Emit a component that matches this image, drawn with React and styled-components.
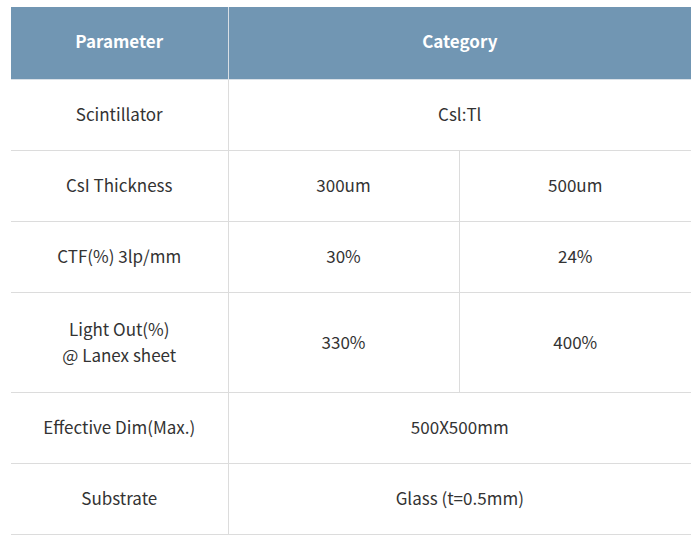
import styled, { createGlobalStyle } from "styled-components";

const GlobalStyle = createGlobalStyle`
  body {
    margin: 0;
    background: #fff;
    font-family: "Noto Sans CJK KR", "Noto Sans", sans-serif;
  }
`;

const rows = [
  { label: "Scintillator", values: ["Csl:Tl"] },
  { label: "CsI Thickness", values: ["300um", "500um"] },
  { label: "CTF(%) 3lp/mm", values: ["30%", "24%"] },
  { label: ["Light Out(%)", "@ Lanex sheet"], values: ["330%", "400%"], tall: true },
  { label: "Effective Dim(Max.)", values: ["500X500mm"] },
  { label: "Substrate", values: ["Glass (t=0.5mm)"] },
];

export default function App() {
  return (
    <Page>
      <GlobalStyle />
      <SpecTable>
        <colgroup>
          <col style={{ width: 217 }} />
          <col style={{ width: 231 }} />
          <col style={{ width: 232 }} />
        </colgroup>
        <thead>
          <HeadRow>
            <HeadCell>Parameter</HeadCell>
            <HeadCell colSpan={2}>Category</HeadCell>
          </HeadRow>
        </thead>
        <tbody>
          {rows.map((row, i) => (
            <BodyRow key={i} tall={row.tall}>
              <Cell>
                {Array.isArray(row.label)
                  ? row.label.map((l, j) => <Line key={j}>{l}</Line>)
                  : row.label}
              </Cell>
              {row.values.length === 1 ? (
                <Cell colSpan={2}>{row.values[0]}</Cell>
              ) : (
                row.values.map((v, j) => <Cell key={j}>{v}</Cell>)
              )}
            </BodyRow>
          ))}
        </tbody>
      </SpecTable>
    </Page>
  );
}

const Page = styled.div`
  padding: 7px 0 0 11px;
`;

const SpecTable = styled.table`
  width: 680px;
  border-collapse: collapse;
  table-layout: fixed;
  font-size: 17px;
  color: #333;
`;

const HeadRow = styled.tr`
  height: 72px;
`;

const HeadCell = styled.th`
  padding: 0 0 4px;
  background: #7196b3;
  color: #fff;
  font-weight: 700;
  font-size: 17px;
  text-align: center;
  border-left: 1px solid #d9dfe5;
  border-bottom: 1px solid #d9e0e7;

  &:first-child {
    border-left: none;
  }
`;

const BodyRow = styled.tr`
  height: ${props => (props.tall ? "100px" : "71px")};
`;

const Cell = styled.td`
  padding: 0 0 1px;
  text-align: center;
  vertical-align: middle;
  border-bottom: 1px solid #dcdcdc;
  border-left: 1px solid #dcdcdc;
  line-height: 26px;

  &:first-child {
    border-left: none;
  }
`;

const Line = styled.div`
  line-height: 26px;
`;
